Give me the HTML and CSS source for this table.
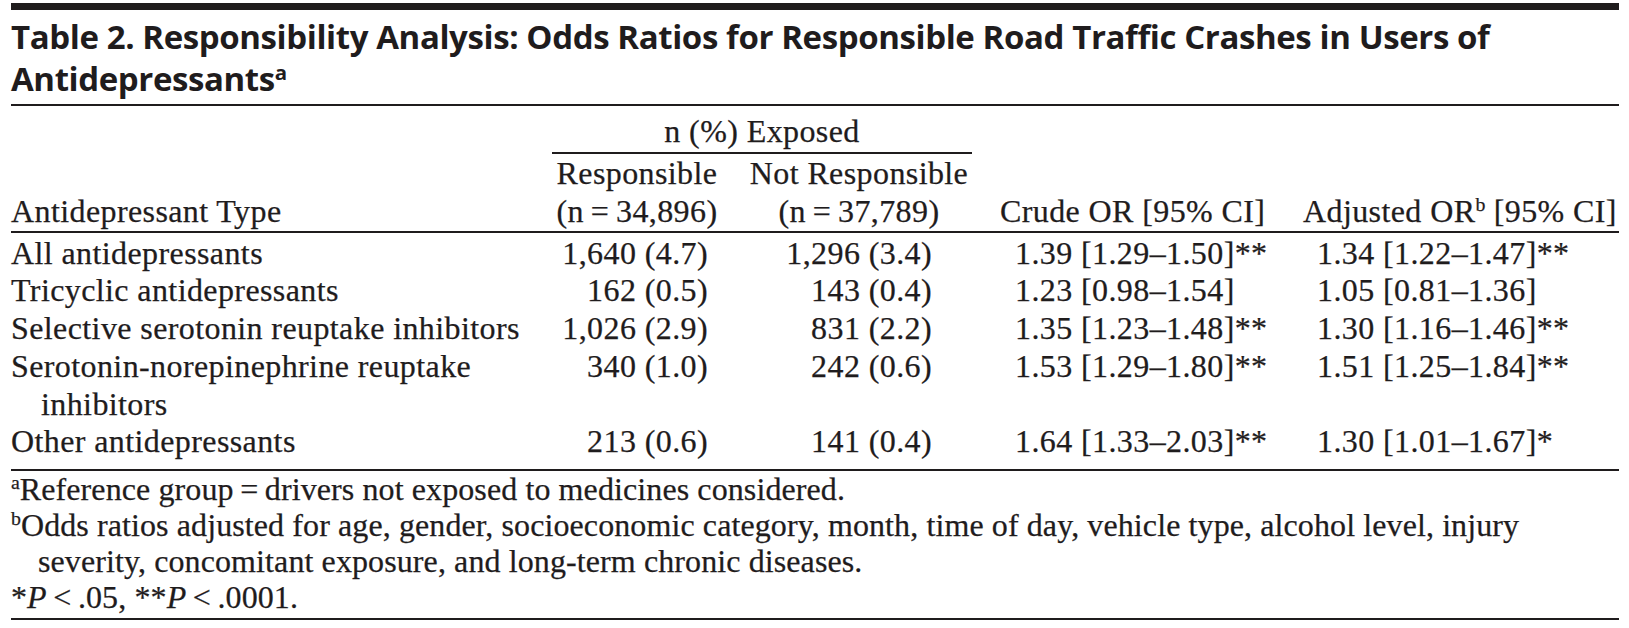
FILE: index.html
```html
<!DOCTYPE html>
<html lang="en">
<head>
<meta charset="utf-8">
<title>Table 2. Responsibility Analysis</title>
<link rel="stylesheet" href="styles.css">
</head>
<body>
<div class="page">
  <div class="topbar"></div>
  <h1 class="title">Table 2. Responsibility Analysis: Odds Ratios for Responsible Road Traffic Crashes in Users of<br>Antidepressants<sup>a</sup></h1>

  <div class="grid thead">
    <div class="h-type">Antidepressant Type</div>
    <div class="h-group">n (%) Exposed</div>
    <div class="h-sub c2 r2">Responsible</div>
    <div class="h-sub c3 r2">Not Responsible</div>
    <div class="h-sub c2 r3">(n&#8201;=&#8201;34,896)</div>
    <div class="h-sub c3 r3">(n&#8201;=&#8201;37,789)</div>
    <div class="h-crude">Crude OR [95% CI]</div>
    <div class="h-adj">Adjusted OR<sup>b</sup> [95% CI]</div>
  </div>

  <div class="grid tbody">
    <div class="name">All antidepressants</div>
    <div class="num n1">1,640 (4.7)</div>
    <div class="num n2">1,296 (3.4)</div>
    <div class="or o1">1.39 [1.29–1.50]**</div>
    <div class="or o2">1.34 [1.22–1.47]**</div>

    <div class="name">Tricyclic antidepressants</div>
    <div class="num n1">162 (0.5)</div>
    <div class="num n2">143 (0.4)</div>
    <div class="or o1">1.23 [0.98–1.54]</div>
    <div class="or o2">1.05 [0.81–1.36]</div>

    <div class="name">Selective serotonin reuptake inhibitors</div>
    <div class="num n1">1,026 (2.9)</div>
    <div class="num n2">831 (2.2)</div>
    <div class="or o1">1.35 [1.23–1.48]**</div>
    <div class="or o2">1.30 [1.16–1.46]**</div>

    <div class="name hang">Serotonin-norepinephrine reuptake<br>inhibitors</div>
    <div class="num n1">340 (1.0)</div>
    <div class="num n2">242 (0.6)</div>
    <div class="or o1">1.53 [1.29–1.80]**</div>
    <div class="or o2">1.51 [1.25–1.84]**</div>

    <div class="name">Other antidepressants</div>
    <div class="num n1">213 (0.6)</div>
    <div class="num n2">141 (0.4)</div>
    <div class="or o1">1.64 [1.33–2.03]**</div>
    <div class="or o2">1.30 [1.01–1.67]*</div>
  </div>

  <div class="notes">
    <p class="note"><sup>a</sup>Reference group&#8201;=&#8201;drivers not exposed to medicines considered.</p>
    <p class="note hang-note"><sup>b</sup>Odds ratios adjusted for age, gender, socioeconomic category, month, time of day, vehicle type, alcohol level, injury<br>severity, concomitant exposure, and long-term chronic diseases.</p>
    <p class="note">*<i>P</i>&#8201;&lt;&#8201;.05, **<i>P</i>&#8201;&lt;&#8201;.0001.</p>
  </div>
</div>
</body>
</html>
```
FILE: styles.css
```css
html, body {
  margin: 0;
  padding: 0;
  background: #ffffff;
}

.page {
  padding: 3px 10px 0 11px;
  color: #1f1c1d;
  font-family: "Liberation Serif", "Times New Roman", serif;
  font-size: 32px;
  letter-spacing: 0.4px;
  -webkit-text-stroke: 0.25px #1f1c1d;
}

.topbar {
  height: 7px;
  background: #1f1c1d;
}

.title {
  margin: 6px 0 0 0;
  padding-bottom: 4px;
  border-bottom: 2px solid #1f1c1d;
  font-family: "Open Sans", "Noto Sans", sans-serif;
  font-weight: 700;
  font-size: 33px;
  line-height: 42px;
  letter-spacing: -0.4px;
  -webkit-text-stroke: 0;
}

sup {
  font-size: 0.62em;
  line-height: 0;
  vertical-align: 0.55em;
  letter-spacing: 0;
}

.grid {
  display: grid;
  grid-template-columns: 519px 190px 278px 302px 319px;
}

/* ---------- header ---------- */
.thead {
  padding: 6px 0 1px 0;
  border-bottom: 2px solid #1f1c1d;
  line-height: 38px;
  grid-template-rows: auto auto auto;
}

.h-type {
  grid-column: 1;
  grid-row: 1 / 4;
  align-self: end;
}

.h-group {
  grid-column: 2 / 4;
  grid-row: 1;
  margin: 0 26px 0 22px;
  padding-bottom: 2px;
  border-bottom: 2px solid #1f1c1d;
  text-align: center;
}

.h-sub {
  text-align: center;
  white-space: nowrap;
}
.c2 { grid-column: 2; padding-left: 24px; }
.c3 { grid-column: 3; }
.r2 { grid-row: 2; }
.r3 { grid-row: 3; }

.h-crude {
  grid-column: 4;
  grid-row: 1 / 4;
  align-self: end;
  padding-left: 2px;
  white-space: nowrap;
}

.h-adj {
  grid-column: 5;
  grid-row: 1 / 4;
  align-self: end;
  padding-left: 3px;
  white-space: nowrap;
}

/* ---------- body ---------- */
.tbody {
  padding: 1.5px 0 7.5px 0;
  border-bottom: 2px solid #1f1c1d;
  line-height: 37.8px;
}

.name {
  white-space: nowrap;
}

.hang {
  padding-left: 30px;
  text-indent: -30px;
}

.num {
  text-align: right;
  white-space: nowrap;
}
.n1 { padding-right: 12px; }
.n2 { padding-right: 66px; }

.or {
  white-space: nowrap;
}
.o1 { padding-left: 17px; }
.o2 { padding-left: 17px; }

/* ---------- notes ---------- */
.notes {
  padding: 0 0 3.5px 0;
  border-bottom: 2px solid #1f1c1d;
  line-height: 36px;
  letter-spacing: 0.1px;
}

.note {
  margin: 0;
  white-space: nowrap;
}

.hang-note {
  padding-left: 27px;
  text-indent: -27px;
}
```
